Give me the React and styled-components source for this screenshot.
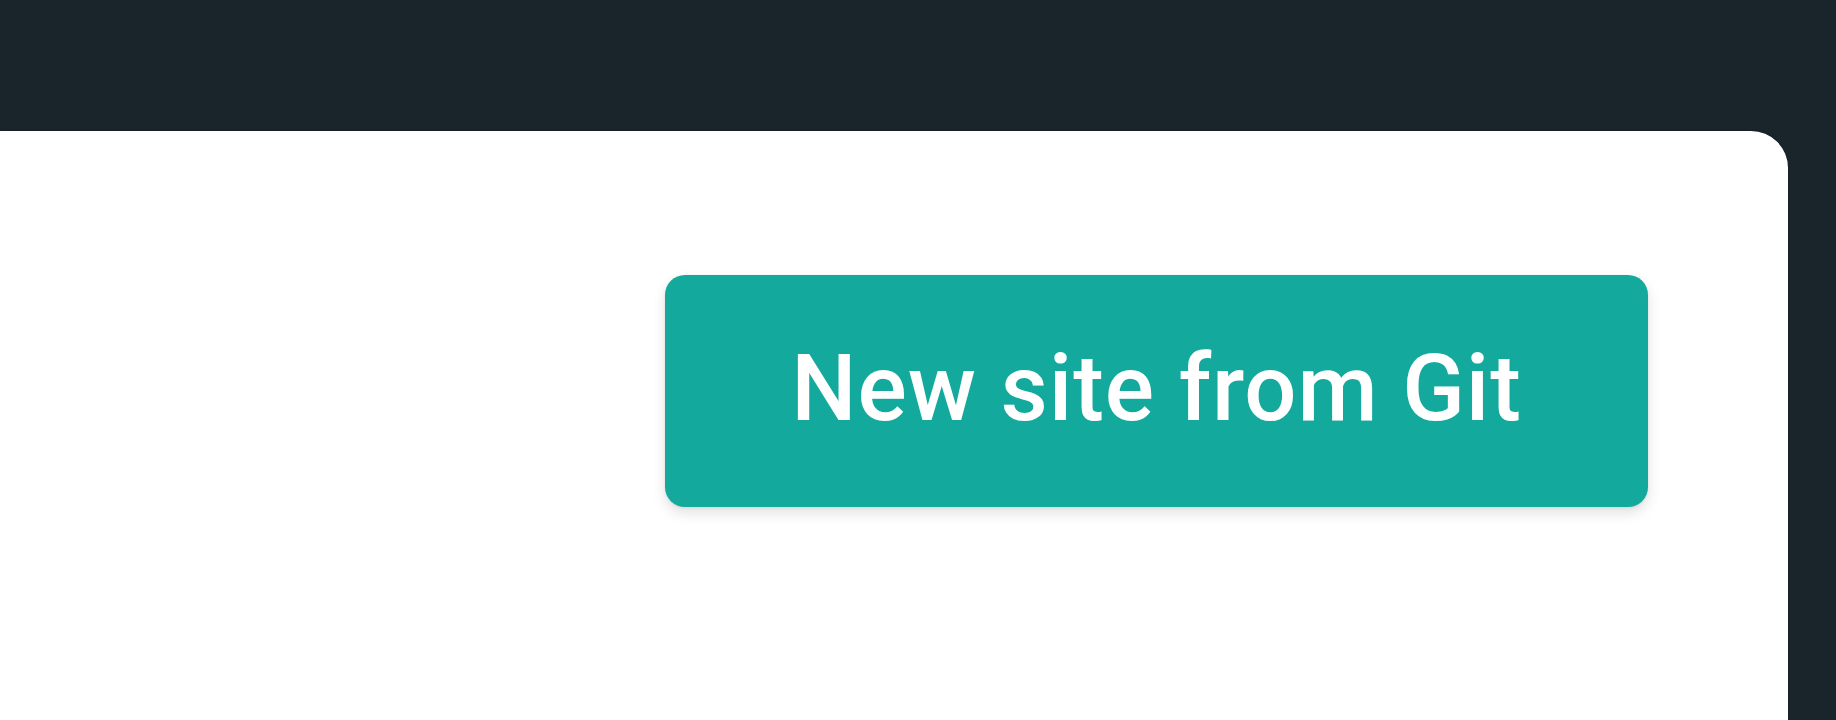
import React from "react";
import styled, { createGlobalStyle } from "styled-components";

const GlobalStyle = createGlobalStyle`
  html, body {
    margin: 0;
    padding: 0;
    background: #1a252b;
    font-family: Roboto, "Noto Sans", "Liberation Sans", sans-serif;
    overflow: hidden;
  }
`;

const Page = styled.div`
  height: 720px;
  display: flex;
  flex-direction: column;
  background: #1a252b;
`;

const TopBar = styled.header`
  height: 131px;
  flex-shrink: 0;
`;

const Body = styled.div`
  flex: 1;
  display: flex;
  padding-right: 48px;
`;

const Card = styled.main`
  flex: 1;
  background: #ffffff;
  border-radius: 0 37px 0 0;
  box-shadow: 0 -1px 2px rgba(0, 0, 0, 0.15);
  padding: 144px 140px 0 0;
  display: flex;
  justify-content: flex-end;
  align-items: flex-start;
`;

const PrimaryButton = styled.button`
  width: 983px;
  height: 232px;
  border: none;
  border-radius: 20px;
  background: #13aa9d;
  color: #ffffff;
  font-family: Roboto, "Noto Sans", "Liberation Sans", sans-serif;
  font-size: 92px;
  font-weight: 500;
  letter-spacing: 0.9px;
  padding: 0 0 6px;
  box-shadow: 0 6px 14px rgba(0, 0, 0, 0.12), 0 1px 3px rgba(0, 0, 0, 0.08);
  cursor: pointer;
`;

export default function App() {
  return (
    <>
      <GlobalStyle />
      <Page>
        <TopBar />
        <Body>
          <Card>
            <PrimaryButton>New site from Git</PrimaryButton>
          </Card>
        </Body>
      </Page>
    </>
  );
}
